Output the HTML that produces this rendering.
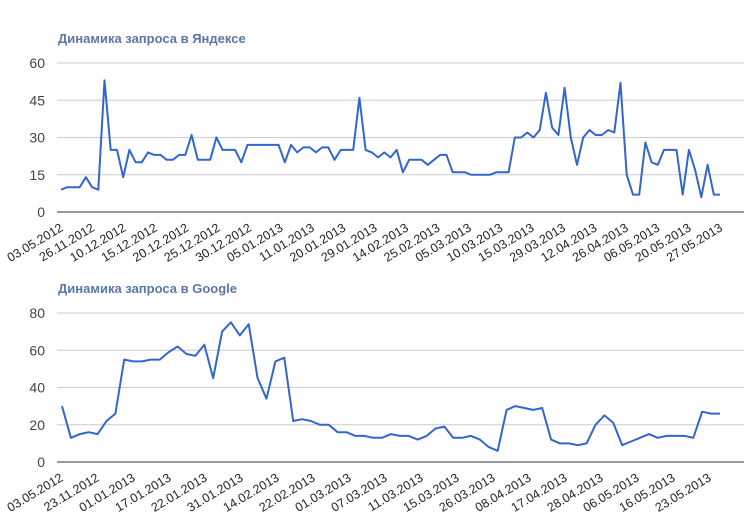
<!DOCTYPE html>
<html><head><meta charset="utf-8"><style>
html,body{margin:0;padding:0;background:#fff;width:744px;height:521px;overflow:hidden}
svg{display:block}
text{font-family:"Liberation Sans",Arial,sans-serif}
</style></head><body>
<svg id="s" width="744" height="521" xmlns="http://www.w3.org/2000/svg">
<text x="58" y="43" font-size="13" font-weight="bold" fill="#5b76ab">Динамика запроса в Яндексе</text>
<text x="58" y="293" font-size="13" font-weight="bold" fill="#5b76ab">Динамика запроса в Google</text>
<g id="g"></g>
</svg>
<script>
var NS="http://www.w3.org/2000/svg",g=document.getElementById('g');
function el(t,a,txt){var e=document.createElementNS(NS,t);for(var k in a)e.setAttribute(k,a[k]);if(txt!=null)e.textContent=txt;g.appendChild(e);return e;}
function chart(y0,ytop,max,step,ticks,vals,x0,dx,labels,lx0,ldx){
  var sc=(y0-ytop)/max;
  for(var i=0;i<=ticks;i++){var v=i*step,y=y0-v*sc;
    if(i>0)el('line',{x1:57,x2:744,y1:y,y2:y,stroke:'#ccc','stroke-width':1});
    el('text',{x:45,y:y+5,'font-size':14,fill:'#444','text-anchor':'end'},String(v));}
  el('line',{x1:57,x2:744,y1:y0,y2:y0,stroke:'#333','stroke-width':1});
  var p=vals.map(function(v,i){return (x0+i*dx).toFixed(1)+','+(y0-v*sc).toFixed(1)}).join(' ');
  el('polyline',{points:p,fill:'none',stroke:'#3366cc','stroke-width':2,'stroke-linejoin':'round'});
  labels.forEach(function(l,i){var x=lx0+i*ldx,y=y0+18;
    el('text',{x:x,y:y,'font-size':12.5,fill:'#222','text-anchor':'end',transform:'rotate(-31 '+x+' '+y+')'},l);});
}
var a=[9,10,10,10,14,10,9,53,25,25,14,25,20,20,24,23,23,21,21,23,23,31,21,21,21,30,25,25,25,20,27,27,27,27,27,27,20,27,24,26,26,24,26,26,21,25,25,25,46,25,24,22,24,22,25,16,21,21,21,19,21,23,23,16,16,16,15,15,15,15,16,16,16,30,30,32,30,33,48,34,31,50,30,19,30,33,31,31,33,32,52,15,7,7,28,20,19,25,25,25,7,25,17,6,19,7,7];
chart(212,63,60,15,4,a,61,(720-61)/(a.length-1),
["03.05.2012","26.11.2012","10.12.2012","15.12.2012","20.12.2012","25.12.2012","30.12.2012","05.01.2013","11.01.2013","20.01.2013","29.01.2013","14.02.2013","25.02.2013","05.03.2013","10.03.2013","15.03.2013","29.03.2013","12.04.2013","26.04.2013","06.05.2013","20.05.2013","27.05.2013"],64,31.4);
var b=[30,13,15,16,15,22,26,55,54,54,55,55,59,62,58,57,63,45,70,75,68,74,45,34,54,56,22,23,22,20,20,16,16,14,14,13,13,15,14,14,12,14,18,19,13,13,14,12,8,6,28,30,29,28,29,12,10,10,9,10,20,25,21,9,11,13,15,13,14,14,14,13,27,26,26];
chart(462,313,80,20,4,b,62,(720-62)/(b.length-1),
["03.05.2012","23.11.2012","01.01.2013","17.01.2013","22.01.2013","31.01.2013","14.02.2013","22.02.2013","01.03.2013","07.03.2013","11.03.2013","15.03.2013","26.03.2013","08.04.2013","17.04.2013","28.04.2013","06.05.2013","16.05.2013","23.05.2013"],64,36);
</script>
</body></html>
